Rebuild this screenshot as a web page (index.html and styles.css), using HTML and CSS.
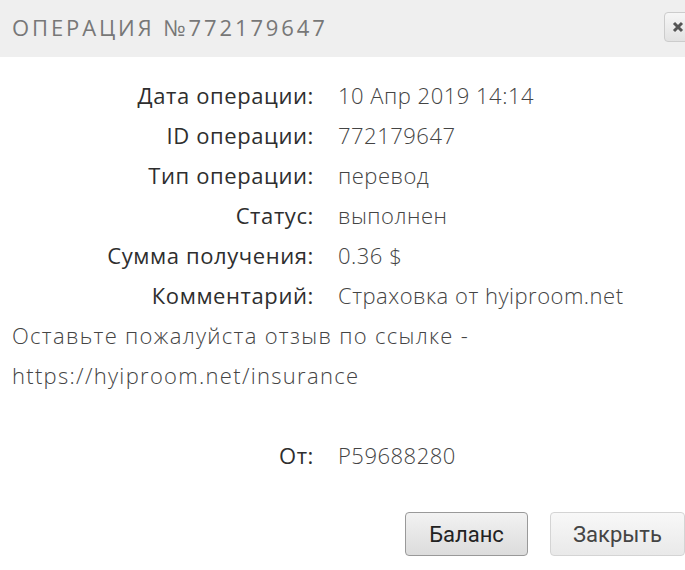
FILE: index.html
```html
<!DOCTYPE html>
<html lang="ru">
<head>
  <meta charset="UTF-8">
  <title>Операция №772179647</title>
  <link rel="stylesheet" href="styles.css">
</head>
<body>
  <div class="modal">
    <div class="modal-header">
      <h2 class="modal-title">Операция №772179647</h2>
      <button class="close-btn" aria-label="Закрыть">
        <svg viewBox="0 0 12 12"><path d="M2 2L10 10M10 2L2 10"/></svg>
      </button>
    </div>

    <div class="modal-body">
      <div class="details">
        <div class="label">Дата операции:</div>
        <div class="value">10 Апр 2019 14:14</div>
        <div class="label">ID операции:</div>
        <div class="value">772179647</div>
        <div class="label">Тип операции:</div>
        <div class="value">перевод</div>
        <div class="label">Статус:</div>
        <div class="value">выполнен</div>
        <div class="label">Сумма получения:</div>
        <div class="value">0.36 $</div>
        <div class="label">Комментарий:</div>
        <div class="value">Страховка от hyiproom.net</div>
      </div>

      <div class="comment">
        <p>Оставьте пожалуйста отзыв по ссылке -</p>
        <p>https://hyiproom.net/insurance</p>
        <p>&nbsp;</p>
      </div>

      <div class="details">
        <div class="label">От:</div>
        <div class="value">P59688280</div>
      </div>
    </div>

    <div class="modal-footer">
      <button class="btn btn-primary">Баланс</button>
      <button class="btn">Закрыть</button>
    </div>
  </div>
</body>
</html>
```

FILE: styles.css
```css
* {
  margin: 0;
  padding: 0;
  box-sizing: border-box;
}

body {
  font-family: 'Open Sans', 'Noto Sans', sans-serif;
  background: #fff;
  color: #444;
  overflow: hidden;
}

.modal {
  width: 685px;
  height: 570px;
}

.modal-header {
  height: 57px;
  background: #efefef;
  display: flex;
  align-items: center;
  justify-content: space-between;
  padding: 0 0 3px 12px;
}

.modal-title {
  font-size: 22px;
  font-weight: 400;
  letter-spacing: 2.9px;
  text-transform: uppercase;
  color: #777;
}

.close-btn {
  width: 30px;
  height: 30px;
  margin-right: -9px;
  border: 1px solid #ccc;
  border-radius: 4px;
  background: linear-gradient(#f6f6f6, #e2e2e2);
  display: flex;
  align-items: center;
  justify-content: flex-start;
  padding-left: 7px;
}

.close-btn svg {
  width: 12px;
  height: 12px;
  stroke: #555;
  stroke-width: 3;
  fill: none;
}

.modal-body {
  padding-top: 18px;
  font-size: 22px;
  line-height: 40px;
}

.details {
  display: grid;
  grid-template-columns: 314px 1fr;
  column-gap: 24px;
}

.label {
  text-align: right;
  font-weight: 500;
  letter-spacing: 0.6px;
  color: #2e2e2e;
  white-space: nowrap;
}

.value,
.comment {
  font-weight: 300;
  letter-spacing: 0.5px;
  color: #444;
  white-space: nowrap;
}

.comment {
  padding-left: 12px;
  letter-spacing: 1.3px;
}

.modal-footer {
  display: flex;
  gap: 22px;
  padding: 37px 0 0 405px;
}

.btn {
  font-family: Roboto, sans-serif;
  font-size: 22px;
  height: 44px;
  padding: 0 22px;
  border: 1px solid #d4d4d4;
  border-radius: 4px;
  background: linear-gradient(#f8f8f8, #e9e9e9);
  color: #444;
  cursor: pointer;
  flex-shrink: 0;
}

.btn-primary {
  width: 123px;
  border-color: #999;
  background: linear-gradient(#f2f2f2, #dcdcdc);
  color: #222;
}
```
